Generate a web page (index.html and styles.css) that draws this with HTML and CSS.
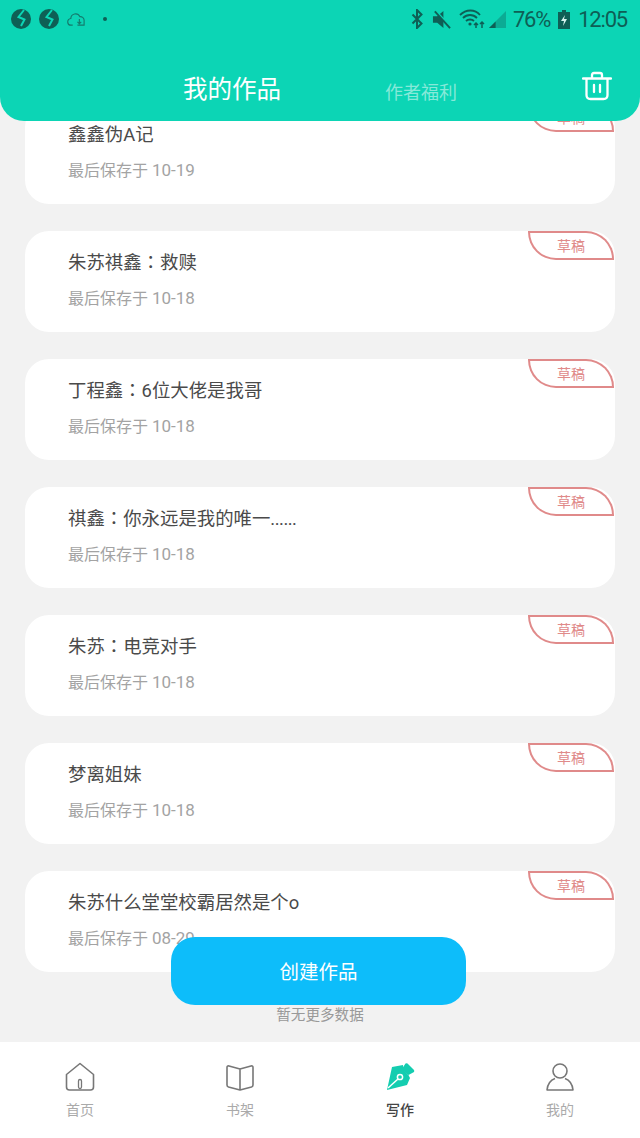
FILE: index.html
```html
<!DOCTYPE html>
<html>
<head>
  <meta charset="utf-8">
  <title>我的作品</title>
  <link rel="stylesheet" href="styles.css">
</head>
<body>
  <div id="page">
    <header id="top">
      <div id="status">
        <div class="status-left">
          <svg class="globe" viewBox="0 0 20 20"><circle cx="10" cy="10" r="10" fill="#0e5f55"/><path d="M13 1L7.500 8l6 2.500-3.500 6.500" fill="none" stroke="#0cd5b5" stroke-width="2"/></svg>
          <svg class="globe" viewBox="0 0 20 20"><circle cx="10" cy="10" r="10" fill="#0e5f55"/><path d="M13 1L7.500 8l6 2.500-3.500 6.500" fill="none" stroke="#0cd5b5" stroke-width="2"/></svg>
          <svg class="cloud" viewBox="0 0 20 16"><path d="M6 14.500H4.500a3.500 3.500 0 0 1-.5-7 5 5 0 0 1 9.500-2 4 4 0 0 1 4.500 3.500v5.500h-7M13 8v5m-2-2l2 2 2-2" fill="none" stroke="#157a6c" stroke-width="1.200"/></svg>
          <span class="dot"></span>
        </div>
        <div class="status-right">
          <svg class="ic-bt" viewBox="0 0 12 20"><path d="M1.500 5.500l9 9L6 19V1l4.500 4.500-9 9" fill="none" stroke="#0e5f55" stroke-width="2"/></svg>
          <svg class="ic-mute" viewBox="0 0 20 20"><path d="M1 6.500h4.500L12 1v18l-6.500-5.500H1z" fill="#0e5f55"/><path d="M4 1l15 16" stroke="#0cd5b5" stroke-width="2"/><path d="M3 1.500l16 17.500" stroke="#0e5f55" stroke-width="2"/></svg>
          <svg class="ic-wifi" viewBox="0 0 26 20"><path d="M1 6c6-6 15-6 20 0M4 9c4-4 10-4 14 0M7 12c2-2 6-2 8 0" fill="none" stroke="#0e5f55" stroke-width="1.800"/><circle cx="11" cy="15" r="1.600" fill="#0e5f55"/><path d="M17 19v-5m-2 2l2-2 2 2M23 19v-6m-2 2l2-2 2 2" fill="none" stroke="#0e5f55" stroke-width="1.500"/></svg>
          <svg class="ic-signal" viewBox="0 0 18 18"><path d="M0 18l18-18v18z" fill="#0e5f55" opacity=".35"/><path d="M0 18l7-7v7z" fill="#0e5f55"/></svg>
          <span class="pct">76%</span>
          <svg class="ic-batt" viewBox="0 0 12 19"><path d="M4 0h4v2h4v17H0V2h4z" fill="#0e5f55"/><path d="M7 5L3 11h3l-1 5 4-7H6z" fill="#d8f5ef"/></svg>
          <span class="clock">12:05</span>
        </div>
      </div>
      <nav id="nav">
        <span class="nav-on">我的作品</span>
        <span class="nav-off">作者福利</span>
        <svg class="trash" viewBox="0 0 30 30"><path d="M1 7.500h28M10 7V4q0-2 2-2h6q2 0 2 2v3M4.500 8v16q0 4 4 4h13q4 0 4-4V8M12 14v7M18 14v7" fill="none" stroke="#fff" stroke-width="2.300" stroke-linecap="round"/></svg>
      </nav>
    </header>

    <main id="list">
      <div class="work"><div class="work-title">鑫鑫伪A记</div><div class="work-date">最后保存于 <span class="num">10-19</span></div><span class="tag">草稿</span></div>
      <div class="work"><div class="work-title">朱苏祺鑫<span class="colon">：</span>救赎</div><div class="work-date">最后保存于 <span class="num">10-18</span></div><span class="tag">草稿</span></div>
      <div class="work"><div class="work-title">丁程鑫<span class="colon">：</span>6位大佬是我哥</div><div class="work-date">最后保存于 <span class="num">10-18</span></div><span class="tag">草稿</span></div>
      <div class="work"><div class="work-title">祺鑫<span class="colon">：</span>你永远是我的唯一<span class="dots">......</span></div><div class="work-date">最后保存于 <span class="num">10-18</span></div><span class="tag">草稿</span></div>
      <div class="work"><div class="work-title">朱苏<span class="colon">：</span>电竞对手</div><div class="work-date">最后保存于 <span class="num">10-18</span></div><span class="tag">草稿</span></div>
      <div class="work"><div class="work-title">梦离姐妹</div><div class="work-date">最后保存于 <span class="num">10-18</span></div><span class="tag">草稿</span></div>
      <div class="work"><div class="work-title">朱苏什么堂堂校霸居然是个o</div><div class="work-date">最后保存于 <span class="num">08-29</span></div><span class="tag">草稿</span></div>
      <div class="no-more">暂无更多数据</div>
    </main>

    <button id="create">创建作品</button>

    <footer id="tabs">
      <div class="tab">
        <svg viewBox="0 0 30 30"><path d="M15 1.500L28.500 12.500V25q0 3-3 3H4.500q-3 0-3-3V12.500z" fill="none" stroke="#777" stroke-width="1.600" stroke-linejoin="round"/><rect x="13.500" y="17.500" width="3" height="9" rx="1.500" fill="none" stroke="#777" stroke-width="1.300"/></svg>
        <span>首页</span>
      </div>
      <div class="tab">
        <svg viewBox="0 0 30 30"><path d="M15 7L4 4q-2-.5-2 1.500V23q0 1.500 1.500 2L15 28l11.500-3q1.500-.5 1.500-2V5.500q0-2-2-1.500zM15 7v21" fill="none" stroke="#777" stroke-width="1.600" stroke-linejoin="round"/></svg>
        <span>书架</span>
      </div>
      <div class="tab tab-on">
        <svg viewBox="0 0 30 30"><path d="M7 5L18 3q0 7 5.500 10L25 16l-3 7L2 28z" fill="#14cdb0"/><path d="M20.500 1.500q1-.5 2 0L29 8q.500 1 0 2l-5.500 3q-5-2-6-7z" fill="#14cdb0"/><circle cx="15" cy="15" r="2.600" fill="none" stroke="#fff" stroke-width="1.500"/><path d="M13 17L3 26" stroke="#fff" stroke-width="1.500"/></svg>
        <span>写作</span>
      </div>
      <div class="tab">
        <svg viewBox="0 0 30 30"><circle cx="15" cy="9" r="7" fill="none" stroke="#777" stroke-width="1.600"/><path d="M2 28q1-9 8-11.500M28 28q-1-9-8-11.500M1.500 28h27" fill="none" stroke="#777" stroke-width="1.600"/></svg>
        <span>我的</span>
      </div>
    </footer>
  </div>
</body>
</html>
```

FILE: styles.css
```css
* {
  box-sizing: border-box;
}
body {
  margin: 0;
  font-family: Roboto, "Noto Sans CJK SC", sans-serif;
  background-color: #f2f2f2;
}
#page {
  position: relative;
  width: 640px;
  height: 1138px;
  overflow: hidden;
  display: flex;
  flex-direction: column;
}

/* header */
#top {
  position: relative;
  z-index: 2;
  height: 121px;
  flex: none;
  background-color: #0cd5b5;
  border-radius: 0 0 24px 24px;
}
#status {
  display: flex;
  justify-content: space-between;
  align-items: center;
  height: 38px;
  padding: 0 13px 0 11px;
}
.status-left, .status-right {
  display: flex;
  align-items: center;
}
.globe {
  width: 20px;
  height: 20px;
  margin-right: 8px;
}
.cloud {
  width: 19px;
  height: 16px;
}
.dot {
  width: 4px;
  height: 4px;
  margin-left: 17px;
  border-radius: 50%;
  background-color: #0e5f55;
}
.ic-bt {
  width: 12px;
  height: 20px;
}
.ic-mute {
  width: 19px;
  height: 19px;
  margin-left: 9px;
}
.ic-wifi {
  width: 26px;
  height: 20px;
  margin-left: 8px;
}
.ic-signal {
  width: 17px;
  height: 17px;
  margin-left: 4px;
}
.pct, .clock {
  color: #0e5f55;
  font-size: 22px;
  letter-spacing: -1.200px;
}
.pct {
  margin-left: 7px;
}
.ic-batt {
  width: 12px;
  height: 19px;
  margin-left: 8px;
}
.clock {
  margin-left: 8px;
}
#nav {
  display: flex;
  align-items: flex-end;
  height: 84px;
  padding: 0 28px 0 183px;
  color: #fff;
}
.nav-on {
  font-size: 24.500px;
  line-height: 36px;
  margin-bottom: 14px;
}
.nav-off {
  font-size: 18px;
  line-height: 28px;
  margin: 0 0 15px 104px;
  color: #86e9d9;
}
.trash {
  width: 30px;
  height: 30px;
  margin: 0 0 21px auto;
}

/* list */
#list {
  flex: 1;
  margin-top: -18px;
  padding: 0 25px;
}
.work {
  position: relative;
  height: 101px;
  margin-bottom: 27px;
  padding: 18px 0 0 43px;
  background-color: #fff;
  border-radius: 24px;
}
.work-title {
  font-size: 18.400px;
  line-height: 28px;
  color: #4a4a4a;
}
.colon {
  font-family: "Noto Sans CJK TC", sans-serif;
  line-height: 0;
}
.dots {
  letter-spacing: -.5px;
}
.work-date {
  margin-top: 8px;
  font-size: 16px;
  line-height: 26px;
  color: #a3a3a3;
}
.num {
  font-size: 17px;
}
.tag {
  position: absolute;
  top: 0;
  right: 1px;
  width: 86px;
  height: 29px;
  border: 2px solid #e08a8a;
  border-radius: 0 28px 0 28px;
  background-color: #fff;
  color: #e08a8a;
  font-size: 14px;
  line-height: 26px;
  text-align: center;
}
.no-more {
  margin-top: 32px;
  font-size: 14.600px;
  line-height: 22px;
  text-align: center;
  color: #999;
}

/* floating button */
#create {
  position: absolute;
  left: 171px;
  top: 937px;
  z-index: 3;
  width: 295px;
  height: 68px;
  padding: 0 0 2px;
  border: 0;
  border-radius: 24px;
  background-color: #0dbdfa;
  color: #fff;
  font-family: inherit;
  font-size: 19.500px;
}

/* bottom tabs */
#tabs {
  display: grid;
  grid-template-columns: repeat(4, 160px);
  flex: none;
  height: 96px;
  padding-top: 20px;
  background-color: #fff;
}
.tab {
  display: flex;
  flex-direction: column;
  align-items: center;
  color: #aaa;
  font-size: 14px;
}
.tab svg {
  width: 30px;
  height: 30px;
  margin-bottom: 7px;
}
.tab span {
  line-height: 22px;
}
.tab-on {
  color: #444;
  font-weight: 500;
}
```
